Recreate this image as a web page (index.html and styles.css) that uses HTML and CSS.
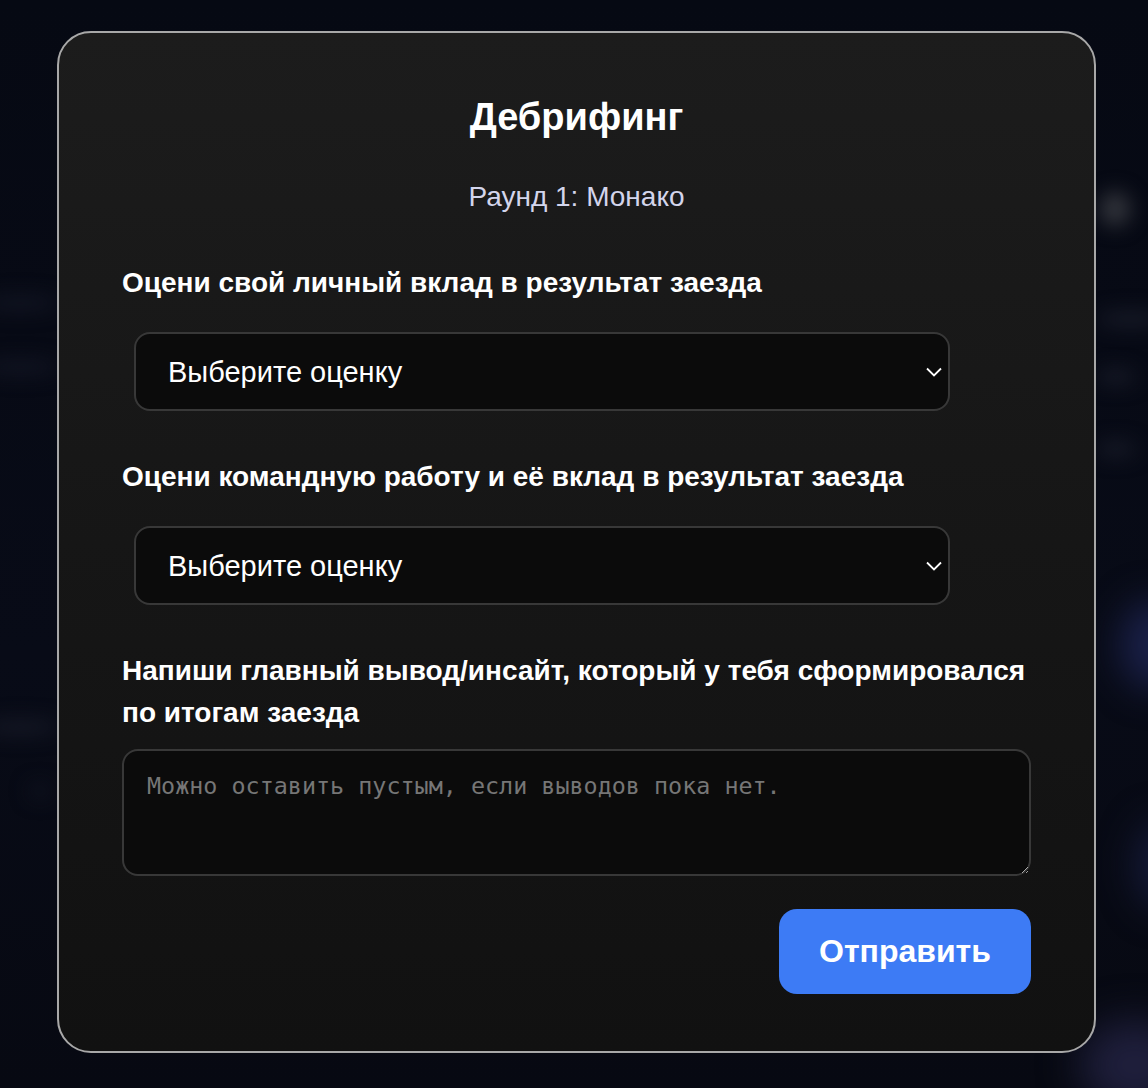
FILE: index.html
```html
<!DOCTYPE html>
<html lang="ru">
<head>
    <meta charset="UTF-8">
    <meta name="viewport" content="width=device-width, initial-scale=1.0">
    <title>Дебрифинг</title>
    <link rel="stylesheet" href="styles.css">
</head>
<body>
    <!-- размытый фон страницы под модалкой -->
    <div class="backdrop">
        <div class="blob blob-gray"></div>
        <div class="blob line line-r1"></div>
        <div class="blob line line-r2"></div>
        <div class="blob line line-r3"></div>
        <div class="blob line line-l1"></div>
        <div class="blob line line-l2"></div>
        <div class="blob line line-l3"></div>
        <div class="blob line line-l4"></div>
        <div class="blob blob-blue b1"></div>
        <div class="blob blob-blue b2"></div>
        <div class="blob blob-red"></div>
    </div>

    <div class="modal">
        <h2 class="modal-title">Дебрифинг</h2>
        <p class="modal-subtitle">Раунд 1: Монако</p>

        <form class="debrief-form">
            <label class="field-label" for="personal">Оцени свой личный вклад в результат заезда</label>
            <div class="select-wrap">
                <select id="personal" class="rating-select">
                    <option>Выберите оценку</option>
                </select>
                <svg class="chevron" width="16" height="10" viewBox="0 0 16 10"><path d="M1 1.5 L8 8.5 L15 1.5" fill="none" stroke="#fff" stroke-width="1.8"/></svg>
            </div>

            <label class="field-label" for="team">Оцени командную работу и её вклад в результат заезда</label>
            <div class="select-wrap">
                <select id="team" class="rating-select">
                    <option>Выберите оценку</option>
                </select>
                <svg class="chevron" width="16" height="10" viewBox="0 0 16 10"><path d="M1 1.5 L8 8.5 L15 1.5" fill="none" stroke="#fff" stroke-width="1.8"/></svg>
            </div>

            <label class="field-label insight" for="insight">Напиши главный вывод/инсайт, который у тебя сформировался по итогам заезда</label>
            <textarea id="insight" class="insight-input" placeholder="Можно оставить пустым, если выводов пока нет."></textarea>

            <div class="actions">
                <button type="button" class="submit-btn">Отправить</button>
            </div>
        </form>
    </div>
</body>
</html>
```

FILE: styles.css
```css
* {
    box-sizing: border-box;
}

html, body {
    margin: 0;
    height: 100%;
}

body {
    background: linear-gradient(180deg, #060913 0%, #080b17 60%, #070912 100%);
    font-family: "Liberation Sans", Arial, sans-serif;
    color: #fff;
    overflow: hidden;
    position: relative;
}

/* фон */
.backdrop {
    position: absolute;
    inset: 0;
    overflow: hidden;
}

.blob {
    position: absolute;
    filter: blur(10px);
    border-radius: 50%;
}

.blob-gray {
    left: 1100px;
    top: 192px;
    width: 30px;
    height: 34px;
    background: #34363d;
}

.line {
    height: 14px;
    background: #1a1d2a;
}

.line-r1 { left: 1096px; top: 312px; width: 70px; }
.line-r2 { left: 1096px; top: 370px; width: 40px; }
.line-r3 { left: 1096px; top: 442px; width: 40px; }
.line-l1 { left: -20px; top: 296px; width: 80px; background: #131624; }
.line-l2 { left: -20px; top: 360px; width: 80px; background: #131624; }
.line-l3 { left: -20px; top: 720px; width: 80px; background: #171a27; }
.line-l4 { left: 30px; top: 784px; width: 20px; background: #121522; }

.blob-blue {
    background: #1a2048;
    filter: blur(18px);
}

.b1 { left: 1120px; top: 600px; width: 70px; height: 90px; }
.b2 { left: 1135px; top: 820px; width: 60px; height: 90px; background: #151a38; }

.blob-red {
    left: 1080px;
    top: 1020px;
    width: 110px;
    height: 90px;
    background: #1f1f3c;
    filter: blur(20px);
}

/* модальное окно */
.modal {
    position: absolute;
    left: 57px;
    top: 31px;
    width: 1039px;
    height: 1022px;
    border: 2px solid #a8a8a8;
    border-radius: 34px;
    background: linear-gradient(180deg, #1c1c1c 0%, #161616 50%, #111111 100%);
    padding: 63px 63px 0 63px;
    display: flex;
    flex-direction: column;
}

.modal-title {
    margin: 0;
    text-align: center;
    font-size: 38px;
    line-height: 43px;
    font-weight: bold;
}

.modal-subtitle {
    margin: 42px 0 0 0;
    text-align: center;
    font-size: 28px;
    line-height: 31px;
    color: #d3d5ec;
}

.debrief-form {
    display: flex;
    flex-direction: column;
    margin-top: 50px;
}

.field-label {
    font-size: 28px;
    line-height: 42px;
    font-weight: bold;
}

.select-wrap {
    position: relative;
    margin: 28px 0 45px 12px;
    width: 816px;
}

.rating-select {
    appearance: none;
    -webkit-appearance: none;
    width: 100%;
    height: 79px;
    padding: 0 60px 0 32px;
    border: 2px solid #383838;
    border-radius: 16px;
    background: #0b0b0b;
    color: #fff;
    font-family: "Liberation Sans", Arial, sans-serif;
    font-size: 29px;
    outline: none;
}

.chevron {
    position: absolute;
    right: 8px;
    top: 35px;
}

.insight-input {
    margin-top: 15px;
    width: 100%;
    height: 127px;
    padding: 20px 23px;
    border: 2px solid #383838;
    border-radius: 16px;
    background: #0b0b0b;
    color: #fff;
    font-family: "DejaVu Sans Mono", monospace;
    font-size: 23.4px;
    line-height: 30px;
    outline: none;
}

.insight-input::placeholder {
    color: #767676;
}

.actions {
    display: flex;
    justify-content: flex-end;
    margin-top: 33px;
}

.submit-btn {
    width: 252px;
    height: 85px;
    border: none;
    border-radius: 18px;
    background-color: #3d7bf5;
    color: #fff;
    font-family: "Liberation Sans", Arial, sans-serif;
    font-size: 32px;
    font-weight: bold;
    cursor: pointer;
}

.submit-btn:hover {
    background-color: #326de0;
}
```
